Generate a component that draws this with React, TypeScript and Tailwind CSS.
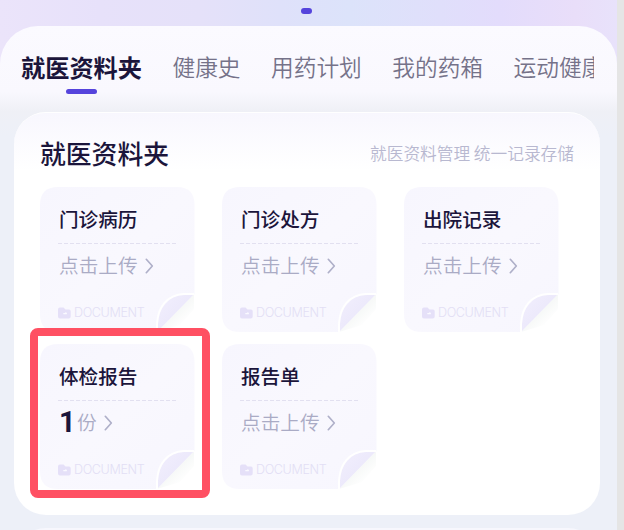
import React from 'react';

const tabs = ['健康史', '用药计划', '我的药箱', '运动健康'];

type Doc = { title: string; count?: number };

const docs: Doc[] = [
  { title: '门诊病历' },
  { title: '门诊处方' },
  { title: '出院记录' },
  { title: '体检报告', count: 1 },
  { title: '报告单' },
];

function NoteShape() {
  return (
    <svg className="absolute inset-0" width="155" height="145" viewBox="0 0 155 145" fill="none">
      <defs>
        <linearGradient id="note" x1="0" y1="0" x2="1" y2="1">
          <stop offset="0" stopColor="#f7f6fe" />
          <stop offset="0.5" stopColor="#f9f8fe" />
          <stop offset="1" stopColor="#f7f6fe" />
        </linearGradient>
        <linearGradient id="curl" x1="118" y1="108" x2="138" y2="126" gradientUnits="userSpaceOnUse">
          <stop offset="0" stopColor="#f2effd" />
          <stop offset="1" stopColor="#ece9fb" />
        </linearGradient>
        <linearGradient id="shade" x1="134" y1="126" x2="144" y2="137" gradientUnits="userSpaceOnUse">
          <stop offset="0" stopColor="#f6f8f7" />
          <stop offset="1" stopColor="#ffffff" />
        </linearGradient>
      </defs>
      <path d="M18 0H137Q154.500 0 154.500 18V107L117 145H18Q0 145 0 127V18Q0 0 18 0Z" fill="url(#note)" />
      <path d="M154 107L117 145L140 138L154 122Z" fill="url(#shade)" />
      <path d="M117 145V137C118 120 127 108 144 107H154Z" fill="url(#curl)" />
      <path d="M117 145V137C118 120 127 108 144 107H154" stroke="#fff" strokeWidth="2" />
    </svg>
  );
}

function Chevron() {
  return (
    <svg width="9" height="16" viewBox="0 0 9 16" fill="none">
      <path d="M1.3 1.3L7.3 8L1.3 14.7" stroke="#afb0c9" strokeWidth="1.7" strokeLinecap="round" strokeLinejoin="round" />
    </svg>
  );
}

function Folder() {
  return (
    <svg width="13" height="12" viewBox="0 0 13 12">
      <path d="M2 .5h3.500l2 2H11q1.700 0 1.700 1.700V9.500q0 2-2 2H2q-2 0-2-2v-7Q0 .5 2 .5Z" fill="#e5e0f8" />
      <path d="M5.300 6.700h3.500M8.800 6.700L7.400 5.500" stroke="#faf9ff" strokeWidth="1.2" />
    </svg>
  );
}

function DocCard({ title, count }: Doc) {
  return (
    <div className="relative h-[145px] w-[155px]">
      <NoteShape />
      <div className="relative pl-[18px] pt-[18px]">
        <h3 className="h-7 pl-px text-[19.6px] leading-7 font-medium text-[#1b153b]">{title}</h3>
        <svg className="mt-[10px] block" width="118" height="1" viewBox="0 0 118 1">
          <path d="M0 .5H118" stroke="#e2e0f0" strokeDasharray="4 2" />
        </svg>
        <div className="mt-[5px] flex h-8 items-center pl-px text-[19.7px] leading-8 font-[350] text-[#aaabc5]">
          {count ? (
            <>
              <span className="mr-[4px] w-[14px] font-[family-name:Roboto] text-[29px] font-bold text-[#1b153b]">{count}</span>
              <span>份</span>
            </>
          ) : (
            <span>点击上传</span>
          )}
          <span className="ml-[7px] pt-[2px]"><Chevron /></span>
        </div>
        <div className="mt-[24px] flex h-4 items-center gap-[3px] font-['Inter','Liberation_Sans',sans-serif] text-[12.6px] leading-4 font-light tracking-[-0.4px] text-[#e3dff5]">
          <Folder />
          <span>DOCUMENT</span>
        </div>
      </div>
    </div>
  );
}

export default function App() {
  return (
    <div className="h-[530px] w-[624px] overflow-hidden bg-[#e5e5e5] font-['Noto_Sans_CJK_SC',sans-serif]">
      <div className="h-[530px] w-[617px] overflow-hidden bg-[linear-gradient(90deg,#ebe4fa_0px,#e7e1fa_100px,#e5e1f9_200px,#dfe1fa_280px,#dce3fa_350px,#e0dffb_440px,#e3dcfc_500px,#e9def9_575px,#e8e2fb_617px)]">
        <div className="flex h-[26px] justify-center pt-[8px] pr-[4px]">
          <i className="block h-[6px] w-[11px] rounded-full bg-[#5544dc]" />
        </div>
        <main className="h-[504px] rounded-t-[38px] bg-[linear-gradient(180deg,#fbfaff_0px,#f9f8fe_66px,#eff0f6_85px,#edf0f8_110px)]">
          <nav className="mr-[23px] flex h-[86px] gap-[30.5px] overflow-hidden pl-[21px] whitespace-nowrap">
            <div className="flex shrink-0 flex-col items-center pt-[23px]">
              <span className="text-[24.2px] leading-9 font-bold text-[#1b153b]">就医资料夹</span>
              <i className="mt-[4px] block h-[5px] w-[31px] rounded-full bg-[#5544dc]" />
            </div>
            {tabs.map((tab) => (
              <span key={tab} className="shrink-0 pt-[23px] text-[22.7px] leading-9 font-[350] text-[#757289]">
                {tab}
              </span>
            ))}
          </nav>
          <section className="ml-[14px] h-[403px] w-[586px] rounded-[32px] border-t border-white bg-[linear-gradient(180deg,#f8f7fe_0px,#ffffff_58px)] px-[26px]">
            <header className="flex h-[74px] items-center justify-between pt-[5px]">
              <h2 className="text-[25.8px] leading-9 font-[450] text-[#1b153b]">就医资料夹</h2>
              <span className="text-[16.7px] leading-6 font-[350] text-[#b8b8d0]">就医资料管理 统一记录存储</span>
            </header>
            <div className="grid grid-cols-[155px_155px_155px] gap-x-[27px] gap-y-[12px]">
              {docs.map((doc) => (
                <div
                  key={doc.title}
                  className={doc.count ? 'relative after:absolute after:-top-[16px] after:-left-[10px] after:h-[170px] after:w-[180px] after:rounded-[8px] after:border-[8px] after:border-[#ff5063]' : ''}
                >
                  <DocCard {...doc} />
                </div>
              ))}
            </div>
          </section>
          <div className="mt-[13px] ml-[14px] h-[40px] w-[586px] rounded-t-[32px] bg-[#f7f7fd]" />
        </main>
      </div>
    </div>
  );
}
